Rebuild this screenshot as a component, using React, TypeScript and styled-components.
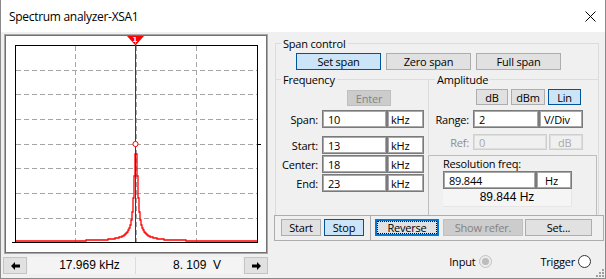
import styled, { createGlobalStyle } from 'styled-components';

const GlobalStyle = createGlobalStyle`
  html, body { margin: 0; padding: 0; background: #fff; }
  * { box-sizing: border-box; }
  body {
    font-family: "Open Sans", "Noto Sans", sans-serif;
    font-size: 11px;
    color: #000;
  }
`;

// Window chrome
const Window = styled.div`
  position: relative;
  width: 606px;
  height: 279px;
  display: flex;
  flex-direction: column;
  background: #f0f0f0;
  border: 1px solid #8a8a8a;
  border-top: none;
`;

const TitleBar = styled.div`
  height: 32px;
  flex: none;
  background: #fff;
  display: flex;
  align-items: center;
  justify-content: space-between;
  padding: 0 9px 0 8px;
`;

const Title = styled.span`
  font-size: 12px;
  letter-spacing: -0.3px;
`;

const Body = styled.div`
  flex: 1;
  display: flex;
  padding: 2px 1px 0 2px;
`;

// Left side: display
const LeftColumn = styled.div`
  width: 265px;
  display: flex;
  flex-direction: column;
`;

const PlotFrame = styled.div`
  margin-left: 1px;
  width: 264px;
  height: 220px;
  border: 1px solid #a9a9a9;
  padding: 1px;
  background: #fff;
  box-shadow: inset 0 0 0 1px #707070;
  svg { display: block; }
`;

const NavRow = styled.div`
  margin-top: 3px;
  height: 17px;
  display: flex;
`;

const ArrowButton = styled.div<{ $right?: boolean }>`
  width: 24px;
  height: 17px;
  margin-left: ${({ $right }) => ($right ? '2px' : '0')};
  margin-right: ${({ $right }) => ($right ? '0' : '1px')};
  background: #e1e1e1;
  border: 1px solid #c4c4c4;
  display: flex;
  align-items: center;
  justify-content: center;
`;

const Readout = styled.div<{ $sep?: boolean }>`
  width: 107px;
  height: 17px;
  background: #f4f4f4;
  border-left: ${({ $sep }) => ($sep ? '1px solid #dcdcdc' : 'none')};
  font-family: "Liberation Sans", Arial, sans-serif;
  font-size: 12px;
  line-height: 17px;
  text-align: center;
  padding-left: 16px;
  white-space: pre;
`;

// Right side: controls
const RightColumn = styled.div`
  width: 330px;
  margin-left: 6px;
  display: flex;
  flex-direction: column;
`;

const Group = styled.fieldset`
  margin: 2px 0 0 1px;
  padding: 0;
  min-width: 0;
  width: 324px;
  border: 1px solid #dcdcdc;
  border-bottom: none;
`;

const Legend = styled.legend<{ $indent: number }>`
  margin-left: ${({ $indent }) => $indent}px;
  padding: 0 2px;
  height: 15px;
  line-height: 15px;
  letter-spacing: -0.2px;
`;

const ButtonRow = styled.div<{ $top: number; $left: number; $gap: number }>`
  display: flex;
  gap: ${({ $gap }) => $gap}px;
  margin-top: ${({ $top }) => $top}px;
  margin-left: ${({ $left }) => $left}px;
`;

type Variant = 'normal' | 'selected' | 'focused' | 'disabled';

const Button = styled.div<{ $w: number; $h?: number; $variant?: Variant }>`
  width: ${({ $w }) => $w}px;
  height: ${({ $h }) => $h ?? 17}px;
  display: flex;
  align-items: center;
  justify-content: center;
  letter-spacing: -0.2px;
  background: ${({ $variant }) =>
    $variant === 'selected' ? '#cce4f7' : $variant === 'disabled' ? '#cccccc' : '#e1e1e1'};
  border: ${({ $variant }) =>
    $variant === 'selected'
      ? '1px solid #005499'
      : $variant === 'focused'
      ? '2px solid #0078d7'
      : $variant === 'disabled'
      ? '1px solid #bfbfbf'
      : '1px solid #adadad'};
  color: ${({ $variant }) => ($variant === 'disabled' ? '#838383' : '#000')};
  outline: ${({ $variant }) => ($variant === 'focused' ? '1px dotted #000' : 'none')};
  outline-offset: -3px;
`;

const Panes = styled.div`
  margin-top: 2px;
  display: flex;
  height: 143px;
`;

const SubGroup = styled.fieldset<{ $w: number; $h: number; $leftLine?: boolean }>`
  margin: 0;
  padding: 0;
  min-width: 0;
  width: ${({ $w }) => $w}px;
  height: ${({ $h }) => $h}px;
  border: none;
  border-top: 1px solid #dcdcdc;
  border-left: ${({ $leftLine }) => ($leftLine ? '1px solid #dcdcdc' : 'none')};
`;

const AmpColumn = styled.div`
  display: flex;
  flex-direction: column;
`;

const FieldRow = styled.div<{ $top: number; $h?: number }>`
  display: flex;
  align-items: stretch;
  margin-top: ${({ $top }) => $top}px;
  height: ${({ $h }) => $h ?? 18}px;
`;

const FieldLabel = styled.div<{ $w: number; $disabled?: boolean }>`
  width: ${({ $w }) => $w}px;
  padding-right: 4px;
  text-align: right;
  display: flex;
  align-items: center;
  justify-content: flex-end;
  letter-spacing: -0.2px;
  color: ${({ $disabled }) => ($disabled ? '#8d8d8d' : '#000')};
`;

const Field = styled.div<{ $w: number; $disabled?: boolean; $pad?: number; $gap?: number }>`
  width: ${({ $w }) => $w}px;
  margin-left: ${({ $gap }) => $gap ?? 0}px;
  display: flex;
  align-items: center;
  padding-left: ${({ $pad }) => $pad ?? 5}px;
  letter-spacing: -0.2px;
  background: ${({ $disabled }) => ($disabled ? '#f0f0f0' : '#fff')};
  color: ${({ $disabled }) => ($disabled ? '#a8a8a8' : '#000')};
  border: 1px solid ${({ $disabled }) => ($disabled ? '#cfcfcf' : '#7a7a7a')};
  box-shadow: inset 0 0 0 1px ${({ $disabled }) => ($disabled ? '#dedede' : '#a8a8a8')};
`;

const ResolutionBox = styled.div`
  width: 169px;
  height: 60px;
  margin-top: 1px;
  border: 1px solid #bdbdbd;
  border-bottom: none;
  padding-left: 14px;
`;

const ResLabel = styled.div`
  height: 15px;
  line-height: 15px;
  letter-spacing: -0.2px;
`;

const ResReadout = styled.div`
  width: 129px;
  height: 18px;
  background: #f5f5f5;
  border-right: 1px solid #e6e6e6;
  border-bottom: 1px solid #e6e6e6;
  font-family: "Liberation Sans", Arial, sans-serif;
  font-size: 12px;
  line-height: 17px;
  text-align: center;
`;

const BottomBar = styled.div`
  width: 330px;
  height: 26px;
  border: 1px solid #adadad;
  display: flex;
`;

const BarSection = styled.div<{ $w?: number; $pad: number; $sep?: boolean }>`
  width: ${({ $w }) => ($w ? `${$w}px` : 'auto')};
  flex: ${({ $w }) => ($w ? 'none' : '1')};
  border-right: ${({ $sep }) => ($sep ? '1px solid #adadad' : 'none')};
  display: flex;
  align-items: flex-start;
  padding: 3px 0 0 ${({ $pad }) => $pad}px;
`;

const RadioRow = styled.div`
  margin-top: 13px;
  height: 15px;
  display: flex;
  justify-content: flex-end;
  align-items: center;
  padding-right: 13px;
`;

const RadioLabel = styled.span<{ $gapLeft?: number }>`
  margin-left: ${({ $gapLeft }) => $gapLeft ?? 0}px;
  letter-spacing: -0.2px;
`;

const Radio = styled.span<{ $disabled?: boolean; $gap: number }>`
  width: 13px;
  height: 13px;
  margin-left: ${({ $gap }) => $gap}px;
  border-radius: 50%;
  border: 1px solid ${({ $disabled }) => ($disabled ? '#c2c2c2' : '#333')};
  background: ${({ $disabled }) => ($disabled ? '#ececec' : '#fff')};
  display: flex;
  align-items: center;
  justify-content: center;
  &::after {
    content: '';
    display: ${({ $disabled }) => ($disabled ? 'block' : 'none')};
    width: 7px;
    height: 7px;
    border-radius: 50%;
    background: #bcbcbc;
  }
`;

const Grip = styled.svg`
  position: absolute;
  right: 1px;
  bottom: 1px;
`;

// Spectrum trace (narrow peak around the cursor, thin tails)
function tracePath() {
  let d = '';
  for (let x = 15; x <= 257; x++) {
    const dx = x - 135.5;
    const h = Math.min(87, 90 / (1 + (dx / 2.1) ** 2) + 5.5 / (1 + (dx / 13) ** 2));
    const y = Math.round(241 - h);
    d += x === 15 ? `M15 ${y}` : ` H${x} V${y}`;
  }
  return d + ' H257';
}

const gridX = [75.5, 136.5, 196.5];
const gridY = [70.5, 94.5, 119.5, 144.5, 168.5, 193.5, 218.5];

function Plot() {
  return (
    <svg width={260} height={216} viewBox="6 36 260 216">
      {gridX.map((x) => (
        <line key={x} x1={x} y1={46} x2={x} y2={242} stroke="#a4a4a4" strokeDasharray="5 3" />
      ))}
      {gridY.map((y) => (
        <line key={y} x1={16} y1={y} x2={257} y2={y} stroke="#a4a4a4" strokeDasharray="5 3" />
      ))}
      <path d={tracePath()} fill="none" stroke="#ff0000" strokeWidth={1.3} />
      <rect x={15.5} y={45.5} width={242} height={197} fill="none" stroke="#000" />
      <line x1={12} y1={242.5} x2={258} y2={242.5} stroke="#000" />
      <line x1={257} y1={144.5} x2={261} y2={144.5} stroke="#000" />
      <line x1={135.5} y1={40} x2={135.5} y2={242} stroke="#d00000" />
      <circle cx={135.5} cy={144} r={2.6} fill="#fff" stroke="#ff0000" />
      <polygon points="127,36 144,36 135.5,45.5" fill="#ff0000" />
      <text x={135} y={42} fontSize={7} fontWeight={700} fill="#fff" textAnchor="middle" fontFamily="DejaVu Sans, sans-serif">
        1
      </text>
      <rect x={135} y={42} width={1} height={2} fill="#00e5ff" />
    </svg>
  );
}

function Arrow({ right }: { right?: boolean }) {
  return (
    <svg width={9} height={8} viewBox="0 0 9 8" style={right ? { transform: 'scaleX(-1)' } : undefined}>
      <polygon points="0,4 4,0 4,2.5 9,2.5 9,5.5 4,5.5 4,8" fill="#000" />
    </svg>
  );
}

export default function App() {
  return (
    <>
      <GlobalStyle />
      <Window>
        <TitleBar>
          <Title>Spectrum analyzer-XSA1</Title>
          <svg width={11} height={11} viewBox="0 0 11 11">
            <path d="M0.5 0.5 L10.5 10.5 M10.5 0.5 L0.5 10.5" stroke="#000" strokeWidth={1} />
          </svg>
        </TitleBar>
        <Body>
          <LeftColumn>
            <PlotFrame>
              <Plot />
            </PlotFrame>
            <NavRow>
              <ArrowButton>
                <Arrow />
              </ArrowButton>
              <Readout>17.969 kHz</Readout>
              <Readout $sep>8. 109  V</Readout>
              <ArrowButton $right>
                <Arrow right />
              </ArrowButton>
            </NavRow>
          </LeftColumn>

          <RightColumn>
            <Group>
              <Legend $indent={5}>Span control</Legend>
              <ButtonRow $top={2} $left={20} $gap={5}>
                <Button $w={85} $variant="selected">Set span</Button>
                <Button $w={85}>Zero span</Button>
                <Button $w={85}>Full span</Button>
              </ButtonRow>
              <Panes>
                <SubGroup $w={152} $h={143}>
                  <Legend $indent={5}>Frequency</Legend>
                  <ButtonRow $top={3} $left={71} $gap={0}>
                    <Button $w={44} $h={16} $variant="disabled">Enter</Button>
                  </ButtonRow>
                  <FieldRow $top={4}>
                    <FieldLabel $w={46}>Span:</FieldLabel>
                    <Field $w={65}>10</Field>
                    <Field $w={37} $pad={3}>kHz</Field>
                  </FieldRow>
                  <FieldRow $top={8}>
                    <FieldLabel $w={46}>Start:</FieldLabel>
                    <Field $w={65}>13</Field>
                    <Field $w={37} $pad={3}>kHz</Field>
                  </FieldRow>
                  <FieldRow $top={1}>
                    <FieldLabel $w={46}>Center:</FieldLabel>
                    <Field $w={65}>18</Field>
                    <Field $w={37} $pad={3}>kHz</Field>
                  </FieldRow>
                  <FieldRow $top={1}>
                    <FieldLabel $w={46}>End:</FieldLabel>
                    <Field $w={65}>23</Field>
                    <Field $w={37} $pad={3}>kHz</Field>
                  </FieldRow>
                </SubGroup>
                <AmpColumn>
                  <SubGroup $w={170} $h={83} $leftLine>
                    <Legend $indent={6}>Amplitude</Legend>
                    <ButtonRow $top={2} $left={47} $gap={3}>
                      <Button $w={32} $h={16}>dB</Button>
                      <Button $w={34} $h={16}>dBm</Button>
                      <Button $w={33} $h={16} $variant="selected">Lin</Button>
                    </ButtonRow>
                    <FieldRow $top={5}>
                      <FieldLabel $w={44}>Range:</FieldLabel>
                      <Field $w={66}>2</Field>
                      <Field $w={44} $pad={4}>V/Div</Field>
                    </FieldRow>
                    <FieldRow $top={6} $h={16}>
                      <FieldLabel $w={44} $disabled>Ref:</FieldLabel>
                      <Field $w={74} $disabled>0</Field>
                      <Field $w={34} $gap={2} $pad={8} $disabled>dB</Field>
                    </FieldRow>
                  </SubGroup>
                  <ResolutionBox>
                    <ResLabel>Resolution freq:</ResLabel>
                    <FieldRow $top={0}>
                      <Field $w={93}>89.844</Field>
                      <Field $w={36} $pad={8}>Hz</Field>
                    </FieldRow>
                    <ResReadout>89.844 Hz</ResReadout>
                  </ResolutionBox>
                </AmpColumn>
              </Panes>
            </Group>

            <BottomBar>
              <BarSection $w={96} $pad={6} $sep>
                <Button $w={40}>Start</Button>
                <Button $w={40} $variant="selected" style={{ marginLeft: 3 }}>
                  Stop
                </Button>
              </BarSection>
              <BarSection $pad={4}>
                <ButtonRow $top={0} $left={0} $gap={4}>
                  <Button $w={64} $variant="focused">Reverse</Button>
                  <Button $w={80} $variant="disabled">Show refer.</Button>
                </ButtonRow>
                <ButtonRow $top={0} $left={2} $gap={0}>
                  <Button $w={67}>Set...</Button>
                </ButtonRow>
              </BarSection>
            </BottomBar>

            <RadioRow>
              <RadioLabel>Input</RadioLabel>
              <Radio $disabled $gap={4} />
              <RadioLabel $gapLeft={48}>Trigger</RadioLabel>
              <Radio $gap={3} />
            </RadioRow>
          </RightColumn>
        </Body>
        <Grip width={8} height={8} viewBox="0 0 8 8">
          {[
            [6, 0],
            [6, 3],
            [3, 3],
            [6, 6],
            [3, 6],
            [0, 6],
          ].map(([x, y]) => (
            <rect key={`${x}-${y}`} x={x} y={y} width={2} height={2} fill="#a0a0a0" />
          ))}
        </Grip>
      </Window>
    </>
  );
}
